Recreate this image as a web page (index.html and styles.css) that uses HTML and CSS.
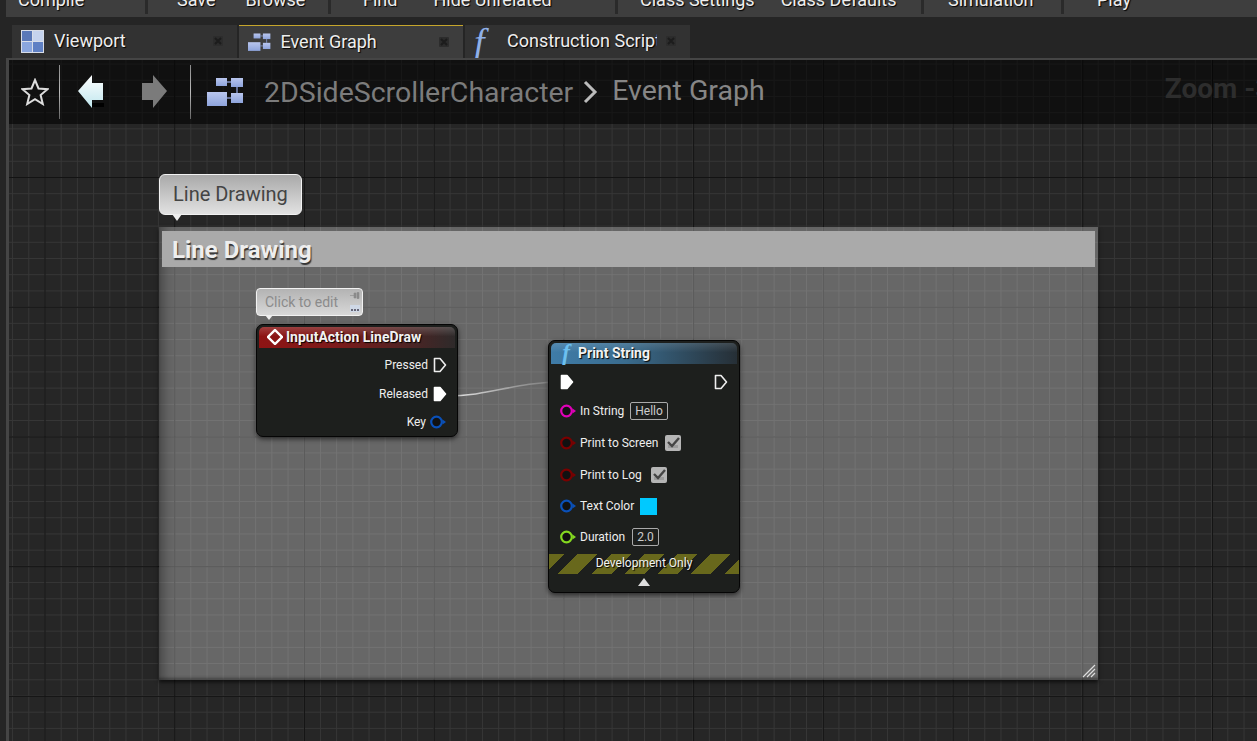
FILE: index.html
```html
<!DOCTYPE html>
<html lang="en">
<head>
    <meta charset="UTF-8">
    <title>Event Graph</title>
    <link rel="stylesheet" href="styles.css">
</head>
<body>
    <svg class="defs" width="0" height="0">
        <defs>
            <linearGradient id="pane-fill" x1="0" y1="0" x2="0" y2="1">
                <stop offset="0" stop-color="#b9c6ee"/>
                <stop offset="1" stop-color="#8ea4dc"/>
            </linearGradient>
            <symbol id="graph-icon" viewBox="0 0 37 29">
                <path d="M20 4H24M30 9V15M20 20H24" stroke="#7f8fc0" stroke-width="1.5"/>
                <rect x="9" y="0" width="11" height="8" fill="url(#pane-fill)"/>
                <rect x="24" y="0" width="12" height="9" fill="url(#pane-fill)"/>
                <rect x="24" y="15" width="12" height="10" fill="url(#pane-fill)"/>
                <rect x="0" y="14" width="20" height="14" fill="url(#pane-fill)"/>
            </symbol>
            <symbol id="close-icon" viewBox="0 0 10 10">
                <rect width="10" height="10" rx="1" fill="#2c2c2c"/>
                <path d="M2 2L8 8M8 2L2 8" stroke="#1c1c1c" stroke-width="2"/>
            </symbol>
            <symbol id="exec-open" viewBox="0 0 14 16">
                <path d="M1.5 1.5H7L12.5 8L7 14.5H1.5Z" fill="none" stroke="#eee" stroke-width="1.6" stroke-linejoin="round"/>
            </symbol>
            <symbol id="exec-full" viewBox="0 0 14 16">
                <path d="M1.5 1.5H7L12.5 8L7 14.5H1.5Z" fill="#fff" stroke="#fff" stroke-width="1.6" stroke-linejoin="round"/>
            </symbol>
            <symbol id="data-pin" viewBox="0 0 16 14">
                <circle cx="6.5" cy="7" r="5.3" fill="#111" stroke="currentColor" stroke-width="2.2"/>
                <path d="M12.5 4.5L16 7L12.5 9.5Z" fill="currentColor"/>
            </symbol>
            <symbol id="check-box" viewBox="0 0 16 16">
                <rect width="16" height="16" rx="2" fill="#b5b5b5"/>
                <rect x="3" y="10" width="10" height="3" fill="#8a8a8a" opacity=".6"/>
                <path d="M3 7L7 11L14 3" fill="none" stroke="#444" stroke-width="2.4"/>
            </symbol>
        </defs>
    </svg>

    <div class="toolbar">
        <div class="tool-group group-compile"><span>Compile</span></div>
        <div class="tool-group group-save"><span>Save</span><span>Browse</span></div>
        <div class="tool-group group-find"><span>Find</span><span>Hide Unrelated</span></div>
        <div class="tool-group group-class"><span>Class Settings</span><span>Class Defaults</span></div>
        <div class="tool-group group-sim"><span>Simulation</span></div>
        <div class="tool-group group-play"><span>Play</span></div>
    </div>

    <div class="tabs">
        <div class="tab">
            <svg class="tab-icon" width="23" height="23" viewBox="0 0 23 23">
                <rect width="23" height="23" fill="#d8dde8"/>
                <rect x="1" y="1" width="10" height="10" fill="#5a78b8"/>
                <rect x="12" y="1" width="10" height="10" fill="#c5d3ee"/>
                <rect x="1" y="12" width="10" height="10" fill="#8aa6de"/>
                <rect x="12" y="12" width="10" height="10" fill="#5f80c4"/>
            </svg>
            <span class="tab-label">Viewport</span>
            <svg class="tab-close" width="10" height="10"><use href="#close-icon"/></svg>
        </div>
        <div class="tab active">
            <svg class="tab-icon" width="24" height="19"><use href="#graph-icon"/></svg>
            <span class="tab-label">Event Graph</span>
            <svg class="tab-close" width="10" height="10"><use href="#close-icon"/></svg>
        </div>
        <div class="tab">
            <span class="tab-icon func-glyph">f</span>
            <span class="tab-label clipped">Construction Script</span>
            <svg class="tab-close" width="10" height="10"><use href="#close-icon"/></svg>
        </div>
    </div>

    <div class="graph">
        <div class="graph-head">
            <svg class="star" width="28" height="28" viewBox="0 0 28 28">
                <path d="M14 2L17.5 10.5L26.5 11.2L19.6 17L21.8 26L14 21.2L6.2 26L8.4 17L1.5 11.2L10.5 10.5Z" fill="none" stroke="#ddd" stroke-width="2"/>
            </svg>
            <div class="head-sep sep-one"></div>
            <svg class="arrow arrow-back" width="26" height="36" viewBox="0 0 26 36">
                <defs>
                    <linearGradient id="back-fill" x1="0" y1="0" x2="0" y2="1">
                        <stop offset="0" stop-color="#fff"/>
                        <stop offset="1" stop-color="#bfe6ee"/>
                    </linearGradient>
                </defs>
                <path d="M13 33L26 33L26 29L14 29Z" fill="#000"/>
                <path d="M14 1L0 17L14 34V26H25V9H14Z" fill="url(#back-fill)"/>
            </svg>
            <svg class="arrow arrow-next" width="26" height="36" viewBox="0 0 26 36">
                <path d="M12 1L26 17L12 34V26H1V9H12Z" fill="#7b7b7b"/>
            </svg>
            <div class="head-sep sep-two"></div>
            <svg class="head-graph-icon" width="37" height="29"><use href="#graph-icon"/></svg>
            <span class="crumb">2DSideScrollerCharacter</span>
            <svg class="crumb-chevron" width="16" height="24" viewBox="0 0 16 24">
                <path d="M3 2L13 12L3 22" fill="none" stroke="#bbb" stroke-width="3"/>
            </svg>
            <span class="crumb crumb-current">Event Graph</span>
            <span class="zoom-label">Zoom -3</span>
        </div>

        <div class="comment">
            <div class="comment-title">Line Drawing</div>
            <svg class="grip" width="14" height="14" viewBox="0 0 14 14">
                <path d="M1 13L13 1M5 13L13 5M9 13L13 9" stroke="#ddd" stroke-width="1.2"/>
            </svg>
        </div>

        <div class="bubble bubble-large">Line Drawing</div>

        <div class="bubble bubble-small">
            <span>Click to edit</span>
            <div class="bubble-tools">
                <svg width="10" height="7" viewBox="0 0 10 7"><path d="M0 3.5H4M4 1H6V6H4ZM7 0.5H9V6.5H7Z" stroke="#8a8a8a" fill="#8a8a8a" stroke-width=".6"/></svg>
                <svg width="10" height="7" viewBox="0 0 10 7"><rect width="10" height="7" fill="#cfd8e6"/><rect x="1" y="4" width="2" height="2" fill="#667"/><rect x="4" y="4" width="2" height="2" fill="#667"/><rect x="7" y="4" width="2" height="2" fill="#667"/></svg>
            </div>
        </div>

        <svg class="wire" width="130" height="30" viewBox="0 0 130 30">
            <defs>
                <linearGradient id="wire-fill" x1="0" y1="0" x2="1" y2="0">
                    <stop offset="0" stop-color="#eee"/>
                    <stop offset=".6" stop-color="#999"/>
                    <stop offset="1" stop-color="#777"/>
                </linearGradient>
            </defs>
            <path d="M4 22C50 22 70 8 122 8" fill="none" stroke="url(#wire-fill)" stroke-width="1.6"/>
        </svg>

        <div class="node node-input">
            <div class="node-head head-event">
                <svg width="16" height="16" viewBox="0 0 16 16">
                    <path d="M8 1L15 8L8 15L1 8Z" fill="none" stroke="#fff" stroke-width="2.4"/>
                </svg>
                <span>InputAction LineDraw</span>
            </div>
            <div class="event-pins">
                <div class="event-pin"><span>Pressed</span><svg width="14" height="16"><use href="#exec-open"/></svg></div>
                <div class="event-pin pin-released"><span>Released</span><svg width="14" height="16"><use href="#exec-full"/></svg></div>
                <div class="event-pin pin-key"><span>Key</span><svg class="pin-blue" width="16" height="14"><use href="#data-pin"/></svg></div>
            </div>
        </div>

        <div class="node node-print">
            <div class="node-head head-func">
                <span class="func-glyph small">f</span>
                <span>Print String</span>
            </div>
            <div class="print-pins">
                <div class="print-row exec-row">
                    <svg width="14" height="16"><use href="#exec-full"/></svg>
                    <svg width="14" height="16"><use href="#exec-open"/></svg>
                </div>
                <div class="print-row">
                    <svg class="pin-pink" width="16" height="14"><use href="#data-pin"/></svg>
                    <span>In String</span>
                    <span class="value-box box-hello">Hello</span>
                </div>
                <div class="print-row">
                    <svg class="pin-red" width="16" height="14"><use href="#data-pin"/></svg>
                    <span>Print to Screen</span>
                    <svg class="check-screen" width="16" height="16"><use href="#check-box"/></svg>
                </div>
                <div class="print-row">
                    <svg class="pin-red" width="16" height="14"><use href="#data-pin"/></svg>
                    <span>Print to Log</span>
                    <svg class="check-log" width="16" height="16"><use href="#check-box"/></svg>
                </div>
                <div class="print-row">
                    <svg class="pin-blue" width="16" height="14"><use href="#data-pin"/></svg>
                    <span>Text Color</span>
                    <span class="swatch"></span>
                </div>
                <div class="print-row">
                    <svg class="pin-green" width="16" height="14"><use href="#data-pin"/></svg>
                    <span>Duration</span>
                    <span class="value-box box-duration">2.0</span>
                </div>
            </div>
            <div class="dev-strip">Development Only</div>
            <div class="collapse-arrow"></div>
        </div>
    </div>
</body>
</html>
```

FILE: styles.css
```css
html, body {
    margin: 0;
    height: 741px;
    overflow: hidden;
}

body {
    display: flex;
    flex-direction: column;
    background-color: #252525;
    color: #eee;
    font-family: 'Roboto', 'Liberation Sans', sans-serif;
}

.defs {
    position: absolute;
}

/* top toolbar, cut off by the window edge */
.toolbar {
    display: flex;
    height: 17px;
    margin-left: 6px;
    background-color: #3e3e3e;
    overflow: hidden;
    flex: none;
}

.tool-group {
    display: flex;
    align-items: flex-end;
    box-sizing: border-box;
    height: 14px;
    border-right: 3px solid #2a2a2a;
    font-size: 18px;
    line-height: 22px;
    white-space: nowrap;
    text-shadow: 1px 1px 1px #000;
    padding-bottom: 3px;
}

.group-compile { width: 142px; padding-left: 12px; }
.group-save { width: 183px; padding-left: 29px; gap: 30px; }
.group-find { width: 287px; padding-left: 32px; gap: 36px; }
.group-class { width: 306px; padding-left: 22px; gap: 26px; }
.group-sim { width: 140px; padding-left: 24px; }
.group-play { flex: 1; padding-left: 33px; border-right: none; }

/* tabs */
.tabs {
    display: flex;
    gap: 2px;
    height: 33px;
    padding: 8px 0 0 12px;
    flex: none;
}

.tab {
    position: relative;
    display: flex;
    align-items: center;
    box-sizing: border-box;
    width: 224.5px;
    padding-left: 9px;
    background-color: #323232;
    font-size: 18px;
    text-shadow: 1px 1px 1px #000;
}

.tab.active {
    background-color: #3d3d3d;
    border-top: 1px solid #c6a62c;
}

.tab-icon {
    flex: none;
    width: 23px;
}

.tab-label {
    margin: -2px 0 0 10px;
    white-space: nowrap;
}

.clipped {
    width: 150px;
    overflow: hidden;
}

.tab-close {
    position: absolute;
    right: 14px;
    top: 11px;
}

.func-glyph {
    font-family: 'Liberation Serif', serif;
    font-style: italic;
    font-size: 38px;
    line-height: 1;
    color: #8fb0e8;
    text-align: left;
    text-shadow: none;
}

.func-glyph.small {
    width: 14px;
    font-size: 23px;
    color: #6cc0f0;
    text-align: center;
}

/* graph canvas */
.graph {
    position: relative;
    flex: 1;
    margin-left: 6px;
    border-left: 3px solid #454545;
    border-top: 2px solid #454545;
    background-color: #262626;
    background-image:
        linear-gradient(#131313 1px, transparent 1px),
        linear-gradient(90deg, #131313 1px, transparent 1px),
        linear-gradient(#363636 1px, transparent 1px),
        linear-gradient(90deg, #363636 1px, transparent 1px);
    background-size: 129.72px 129.72px, 129.72px 129.72px, 16.215px 16.215px, 16.215px 16.215px;
    background-position: 0 117px, 35.5px 0, 0 117px, 35.5px 0;
}

.graph-head {
    display: flex;
    align-items: center;
    height: 64px;
    background-color: rgba(0, 0, 0, 0.56);
    white-space: nowrap;
}

.star {
    margin-left: 12px;
    flex: none;
}

.head-sep {
    width: 1px;
    height: 54px;
    background: linear-gradient(#8a8a8a, #bbb 50%, #666);
    flex: none;
}

.sep-one { margin-left: 10px; }
.sep-two { margin-left: 23px; }
.arrow { flex: none; }
.arrow-back { margin-left: 18px; }
.arrow-next { margin-left: 37px; }

.head-graph-icon {
    margin-left: 16px;
    flex: none;
}

.crumb {
    margin-left: 20px;
    font-size: 28.5px;
    color: #7c7c7c;
}

.crumb-chevron {
    margin-left: 9px;
    flex: none;
}

.crumb-current {
    margin: -4px 0 0 14px;
    color: #868686;
}

.zoom-label {
    margin: -7px 0 0 400px;
    font-size: 28px;
    font-weight: 700;
    color: #2d2d2d;
}

/* comment box and bubbles */
.comment {
    position: absolute;
    left: 150px;
    top: 167px;
    box-sizing: border-box;
    width: 939px;
    height: 453px;
    padding: 4px 3px 0;
    background-color: rgba(255, 255, 255, 0.3);
    box-shadow: 0 2px 4px rgba(0, 0, 0, 0.7), inset 12px 0 12px -8px rgba(0, 0, 0, 0.35), inset 0 -3px 3px -1px rgba(0, 0, 0, 0.35);
}

.comment-title {
    height: 36px;
    padding-left: 10px;
    background-color: #aaa;
    font-size: 24px;
    font-weight: 700;
    line-height: 38px;
    color: #eee;
    text-shadow: 1px 2px 1px #333;
}

.grip {
    position: absolute;
    right: 2px;
    bottom: 2px;
}

.bubble {
    position: absolute;
    box-sizing: border-box;
    border: 1px solid #f2f2f2;
    background: linear-gradient(#a9a9a9, #e2e2e2);
}

.bubble::after {
    content: '';
    position: absolute;
    top: 100%;
    border-style: solid;
    border-color: #eee transparent transparent;
}

.bubble-large {
    left: 150px;
    top: 114px;
    width: 143px;
    height: 41px;
    padding-left: 13px;
    border-radius: 6px;
    font-size: 20px;
    line-height: 38px;
    color: #444;
}

.bubble-large::after {
    left: 12px;
    border-width: 7px 5px 0;
}

.bubble-small {
    display: flex;
    justify-content: space-between;
    left: 247px;
    top: 228px;
    width: 107px;
    height: 28px;
    padding: 0 2px 0 8px;
    border-radius: 4px;
    background: linear-gradient(#b3b3b3, #d8d8d8);
    font-size: 14px;
    line-height: 26px;
    color: #8b8b8b;
}

.bubble-small::after {
    left: 8px;
    border-width: 5px 4px 0;
}

.bubble-tools {
    display: flex;
    flex-direction: column;
    gap: 6px;
    padding-top: 3px;
}

.wire {
    position: absolute;
    left: 433px;
    top: 314px;
}

/* nodes */
.node {
    position: absolute;
    box-sizing: border-box;
    padding: 2px;
    border: 1px solid #050505;
    border-radius: 7px;
    background-color: #1d1f1d;
    box-shadow: 0 2px 5px rgba(0, 0, 0, 0.6);
    font-size: 12px;
}

.node-head {
    display: flex;
    align-items: center;
    box-sizing: border-box;
    gap: 3px;
    height: 21px;
    padding: 0 0 2px 8px;
    border-radius: 5px 5px 0 0;
    font-size: 14px;
    font-weight: 700;
    color: #f2f2f2;
    text-shadow: 1px 1px 1px #000;
}

.head-event {
    background:
        linear-gradient(rgba(255, 255, 255, 0.18), transparent 45%),
        linear-gradient(90deg, #8e1414, #7c1a1a 40%, #2e2a2a);
}

.head-func {
    background:
        linear-gradient(rgba(255, 255, 255, 0.12), transparent 45%),
        linear-gradient(90deg, #3f7ca8, #3a6c8e 40%, #262f36);
    gap: 5px;
}

.node-input {
    left: 247px;
    top: 264px;
    width: 202px;
    height: 113px;
}

.event-pins {
    padding: 3px 8px 0 0;
}

.event-pin {
    display: flex;
    align-items: center;
    justify-content: flex-end;
    gap: 5px;
    height: 28px;
}

.pin-released {
    margin-top: 1px;
}

.pin-key {
    height: 27px;
    gap: 4px;
    margin-right: 1px;
}

.node-print {
    left: 539px;
    top: 280px;
    width: 192px;
    height: 253px;
}

.print-pins {
    display: grid;
    grid-template-rows: 29px 30px 33px 32px 30px 32px;
    padding: 3px 0 0 9px;
}

.print-row {
    display: flex;
    align-items: center;
    gap: 4px;
}

.exec-row {
    justify-content: space-between;
    padding-right: 9px;
}

.print-row span:first-of-type {
    margin-right: 1px;
}

.value-box {
    box-sizing: border-box;
    padding: 0 4px;
    border: 1px solid #aaa;
    border-radius: 2px;
    line-height: 16px;
    color: #ccc;
}

.box-hello { margin-left: 1px; }
.check-screen { margin-left: 2px; }
.check-log { margin-left: 4px; }
.box-duration { margin-left: 2px; }

.swatch {
    width: 17px;
    height: 17px;
    background-color: #00c9ff;
    margin-left: 1px;
}

.print-row .swatch {
    margin-right: 0;
}

.pin-pink { color: #e000b8; }
.pin-red { color: #7a0000; }
.pin-blue { color: #0a50b8; }
.pin-green { color: #84d820; }

.dev-strip {
    height: 20px;
    margin: 1px -2px 0;
    background: repeating-linear-gradient(135deg, #68681c -3px 11px, #1d1f1d 11px 20.5px);
    font-size: 12px;
    line-height: 18px;
    text-align: center;
    color: #f2f2f2;
    text-shadow: 1px 1px 1px #000;
}

.collapse-arrow {
    width: 0;
    margin: 4px auto 0;
    border-style: solid;
    border-width: 0 6px 8px;
    border-color: transparent transparent #ddd;
}
```
